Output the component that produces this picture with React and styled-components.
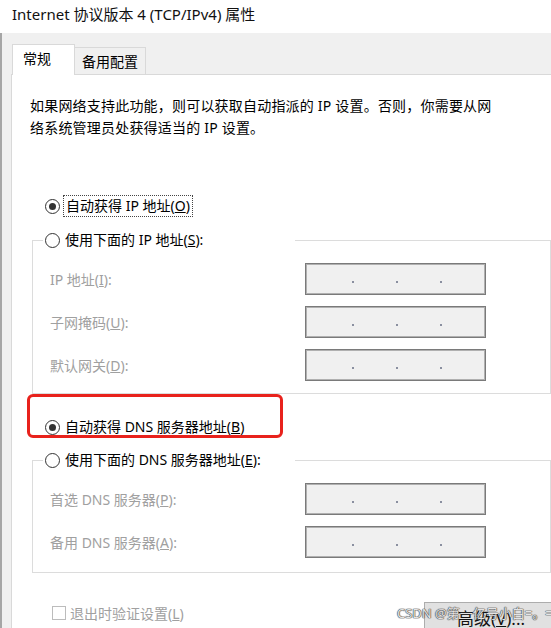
import React from 'react'
import styled, { createGlobalStyle } from 'styled-components'

const GlobalStyle = createGlobalStyle`
  html, body {
    margin: 0;
    padding: 0;
    background: #f0f0f0;
  }
  body {
    font-family: "Noto Sans", "Noto Sans CJK SC", sans-serif;
  }
`

const Window = styled.div`
  position: relative;
  width: 551px;
  height: 628px;
  overflow: hidden;
  background: #f0f0f0;
  color: #000;
  font-size: 14px;
`

const TitleBar = styled.div`
  height: 33px;
  box-sizing: border-box;
  padding-left: 12px;
  background: #fff;
  font-size: 15px;
  line-height: 28px;
  color: #111;
`

const Body = styled.div`
  display: flex;
  height: 595px;
  box-sizing: border-box;
  border-left: 2px solid #a6a6a6;
  padding-left: 9px;
`

const Main = styled.div`
  flex: 1;
  display: flex;
  flex-direction: column;
  min-width: 0;
`

const TabStrip = styled.div`
  display: flex;
  align-items: flex-end;
  height: 41px;
  padding-left: 1px;
  position: relative;
  z-index: 1;
`

const Tab = styled.div`
  box-sizing: border-box;
  width: ${p => (p.$active ? '63px' : '71px')};
  height: ${p => (p.$active ? '31px' : '27px')};
  margin-bottom: ${p => (p.$active ? '-1px' : '0')};
  padding-left: ${p => (p.$active ? '10px' : '0')};
  text-align: ${p => (p.$active ? 'left' : 'center')};
  line-height: 28px;
  background: ${p => (p.$active ? '#fff' : '#f0f0f0')};
  border: 1px solid #d9d9d9;
  border-bottom: none;
  border-left: ${p => (p.$active ? '1px solid #d9d9d9' : 'none')};
  font-size: 14px;
`

const Panel = styled.div`
  flex: 1;
  background: #fff;
  border-left: 1px solid #d9d9d9;
  border-top: 1px solid #d9d9d9;
  padding: 20px 0 0 20px;
  overflow: hidden;
`

const Description = styled.p`
  margin: 0 0 0 -2px;
  line-height: 22px;
  letter-spacing: 0.2px;
`

const RadioRow = styled.div`
  display: flex;
  align-items: center;
  height: 22px;
  padding-left: ${p => p.$indent || 0}px;
  margin-top: ${p => p.$top || 0}px;
`

const Circle = styled.span`
  flex: none;
  width: 15px;
  height: 15px;
  box-sizing: border-box;
  border-radius: 50%;
  border: 1.5px solid #333;
  background: #fff;
  display: flex;
  align-items: center;
  justify-content: center;

  &::after {
    content: '';
    width: 7px;
    height: 7px;
    border-radius: 50%;
    background: ${p => (p.$checked ? '#333' : 'transparent')};
  }
`

const RadioLabel = styled.span`
  margin-left: ${p => (p.$focused ? '3px' : '5px')};
  padding: ${p => (p.$focused ? '0 2px' : '0')};
  line-height: 20px;
  border: ${p => (p.$focused ? '1px dotted #444' : 'none')};
  white-space: nowrap;
`

const Group = styled.fieldset`
  box-sizing: border-box;
  width: 519px;
  margin: ${p => p.$top}px 0 0 0;
  padding: 0;
  border: 1px solid #dcdcdc;
  min-inline-size: auto;
`

const Legend = styled.legend`
  box-sizing: border-box;
  width: 252px;
  margin-left: 10px;
  padding: 0 0 0 2px;
`

const Fields = styled.div`
  display: grid;
  grid-template-columns: 255px 181px;
  row-gap: 11px;
  padding: 12px 0 ${p => p.$bottom}px 17px;
`

const FieldLabel = styled.div`
  align-self: center;
  color: #a0a0a0;
  white-space: nowrap;
`

const IpBox = styled.div`
  box-sizing: border-box;
  height: 32px;
  background: #f0f0f0;
  border: 1px solid #7a7a7a;
  box-shadow: inset 0 0 0 1px #b0b0b0;
  display: flex;
  align-items: center;
  gap: 42px;
  padding: 6px 0 0 46px;
`

const Dot = styled.span`
  width: 2px;
  height: 2px;
  background: #8a8fa0;
`

const Highlight = styled.div`
  box-sizing: border-box;
  width: 256px;
  height: 44px;
  margin-left: -5px;
  padding: 19px 0 0 15px;
  border: 3px solid #e8221c;
  border-radius: 6px;
`

const Footer = styled.div`
  display: flex;
  align-items: flex-start;
  margin-top: 29px;
  margin-right: -7px;
`

const CheckRow = styled.div`
  display: flex;
  align-items: center;
  height: 22px;
  padding-left: 20px;
  color: #a0a0a0;
`

const CheckBox = styled.span`
  width: 14px;
  height: 14px;
  box-sizing: border-box;
  border: 1px solid #bcbcbc;
  margin-right: 4px;
`

const Button = styled.div`
  margin-left: auto;
  width: 134px;
  height: 34px;
  box-sizing: border-box;
  background: #e1e1e1;
  border: 1px solid #adadad;
  text-align: center;
  font-size: 17px;
  line-height: 32px;
  color: #111;
`

const Watermark = styled.div`
  position: absolute;
  left: 397px;
  top: 603px;
  font-size: 13px;
  line-height: 20px;
  color: rgba(255, 255, 255, 0.85);
  text-shadow: 0 0 1px #555, 0 0 1px #555, 0 0 1px #555, 0 0 1px #555;
  white-space: nowrap;
`

const Radio = ({ checked, focused, children }) => (
  <>
    <Circle $checked={checked} />
    <RadioLabel $focused={focused}>{children}</RadioLabel>
  </>
)

const IpField = () => (
  <IpBox>
    <Dot />
    <Dot />
    <Dot />
  </IpBox>
)

const App = () => {
  return (
    <Window>
      <GlobalStyle />
      <TitleBar>Internet 协议版本 4 (TCP/IPv4) 属性</TitleBar>
      <Body>
        <Main>
          <TabStrip>
            <Tab $active>常规</Tab>
            <Tab>备用配置</Tab>
          </TabStrip>
          <Panel>
            <Description>
              如果网络支持此功能，则可以获取自动指派的 IP 设置。否则，你需要从网
              <br />
              络系统管理员处获得适当的 IP 设置。
            </Description>

            <RadioRow $indent={13} $top={56}>
              <Radio checked focused>自动获得 IP 地址(<u>O</u>)</Radio>
            </RadioRow>

            <Group $top={12}>
              <Legend>
                <RadioRow>
                  <Radio>使用下面的 IP 地址(<u>S</u>):</Radio>
                </RadioRow>
              </Legend>
              <Fields $bottom={12}>
                <FieldLabel>IP 地址(<u>I</u>):</FieldLabel>
                <IpField />
                <FieldLabel>子网掩码(<u>U</u>):</FieldLabel>
                <IpField />
                <FieldLabel>默认网关(<u>D</u>):</FieldLabel>
                <IpField />
              </Fields>
            </Group>

            <Highlight>
              <RadioRow>
                <Radio checked>自动获得 DNS 服务器地址(<u>B</u>)</Radio>
              </RadioRow>
            </Highlight>

            <Group $top={11}>
              <Legend>
                <RadioRow>
                  <Radio>使用下面的 DNS 服务器地址(<u>E</u>):</Radio>
                </RadioRow>
              </Legend>
              <Fields $bottom={14}>
                <FieldLabel>首选 DNS 服务器(<u>P</u>):</FieldLabel>
                <IpField />
                <FieldLabel>备用 DNS 服务器(<u>A</u>):</FieldLabel>
                <IpField />
              </Fields>
            </Group>

            <Footer>
              <CheckRow>
                <CheckBox />
                退出时验证设置(<u>L</u>)
              </CheckRow>
              <Button>高级(<u>V</u>)...</Button>
            </Footer>
          </Panel>
        </Main>
      </Body>
      <Watermark>CSDN @第一亿号小白=。=</Watermark>
    </Window>
  )
}

export default App
